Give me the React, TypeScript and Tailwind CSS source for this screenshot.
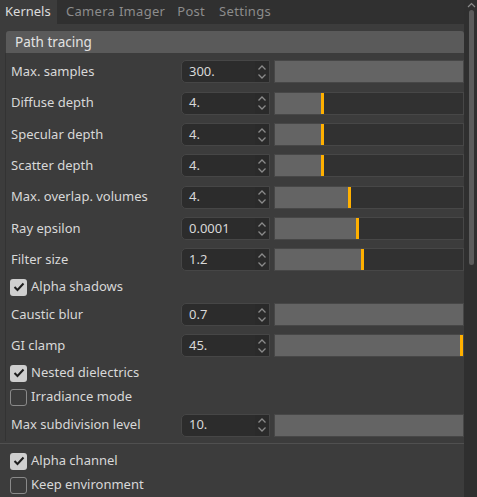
import React from "react";

type Row =
  | { kind: "num"; label: string; value: string; pos: number | null; h: string }
  | { kind: "check"; label: string; checked: boolean };

const rows: Row[] = [
  { kind: "num", label: "Max. samples", value: "300.", pos: null, h: "h-[31px]" },
  { kind: "num", label: "Diffuse depth", value: "4.", pos: 46, h: "h-[32px]" },
  { kind: "num", label: "Specular depth", value: "4.", pos: 46, h: "h-[31px]" },
  { kind: "num", label: "Scatter depth", value: "4.", pos: 46, h: "h-[31px]" },
  { kind: "num", label: "Max. overlap. volumes", value: "4.", pos: 73, h: "h-[32px]" },
  { kind: "num", label: "Ray epsilon", value: "0.0001", pos: 81, h: "h-[31px]" },
  { kind: "num", label: "Filter size", value: "1.2", pos: 86, h: "h-[31px]" },
  { kind: "check", label: "Alpha shadows", checked: true },
  { kind: "num", label: "Caustic blur", value: "0.7", pos: null, h: "h-[31px]" },
  { kind: "num", label: "GI clamp", value: "45.", pos: 185, h: "h-[31px]" },
  { kind: "check", label: "Nested dielectrics", checked: true },
  { kind: "check", label: "Irradiance mode", checked: false },
  { kind: "num", label: "Max subdivision level", value: "10.", pos: null, h: "h-[32px]" },
];

function Spinner() {
  return (
    <svg width="10" height="16" viewBox="0 0 10 16" fill="none" stroke="#8a8a8a" strokeWidth="1.3">
      <path d="M1.5 5.5 L5 2 L8.5 5.5" />
      <path d="M1.5 10.5 L5 14 L8.5 10.5" />
    </svg>
  );
}

function CheckBox({ checked }: { checked: boolean }) {
  return checked ? (
    <div className="w-[17px] h-[17px] rounded-[3px] bg-[#cfcfcf] flex items-center justify-center">
      <svg width="12" height="10" viewBox="0 0 12 10" fill="none" stroke="#1e1e1e" strokeWidth="2">
        <path d="M1.5 5 L4.5 8 L10.5 1.5" />
      </svg>
    </div>
  ) : (
    <div className="w-[17px] h-[17px] rounded-[3px] border border-[#8a8a8a]" />
  );
}

function NumRow({ label, value, pos, h }: { label: string; value: string; pos: number | null; h: string }) {
  return (
    <div className={`flex items-center ${h}`}>
      <div className="w-[170px] shrink-0 text-[13px] text-[#d8d8d8]">{label}</div>
      <div className="w-[89px] h-[23px] shrink-0 flex items-center bg-[#2c2c2c] border border-[#464646] rounded-l-[5px]">
        <span className="flex-1 pl-[7px] text-[13px] text-[#d8d8d8]">{value}</span>
        <div className="w-[14px] h-full flex items-center justify-center bg-[#2a2a2a]">
          <Spinner />
        </div>
      </div>
      <div className="ml-[4px] flex-1 min-w-0 h-[23px] border border-[#474747] bg-[#313131] flex overflow-hidden">
        {pos === null ? (
          <div className="flex-1 bg-[#646464]" />
        ) : (
          <>
            <div className="shrink-0 bg-[#646464]" style={{ width: pos }} />
            <div className="shrink-0 w-[3px] bg-[#ffb000]" />
          </>
        )}
      </div>
    </div>
  );
}

function CheckRow({ label, checked }: { label: string; checked: boolean }) {
  return (
    <div className="flex items-center h-[24px]">
      <CheckBox checked={checked} />
      <span className="ml-[4px] text-[13px] text-[#d8d8d8]">{label}</span>
    </div>
  );
}

export default function App() {
  return (
    <div
      className="w-[477px] h-[497px] flex bg-[#3c3c3c] overflow-hidden"
      style={{ fontFamily: '"Noto Sans", "Open Sans", sans-serif' }}
    >
      <div className="w-[464px] flex flex-col">
        {/* tabs */}
        <div className="h-[24px] flex items-center bg-[#303030] text-[13px]">
          <div className="h-full px-[5px] flex items-center bg-[#3c3c3c] text-[#dcdcdc] w-[57px]">Kernels</div>
          <div className="ml-[9px] text-[#8c8c8c] tracking-[0.3px]">Camera Imager</div>
          <div className="ml-[12px] text-[#8c8c8c] tracking-[0.3px]">Post</div>
          <div className="ml-[14px] text-[#8c8c8c] tracking-[0.3px]">Settings</div>
        </div>

        <div className="pt-[7px]">
          <div className="ml-[6px] h-[22px] bg-[#5a5a5a] rounded-t-[3px] flex items-center pl-[9px] text-[13.5px] text-[#e2e2e2]">
            Path tracing
          </div>
          <div className="ml-[5px] border-l border-[#333333] pl-[5px] pt-[3px]">
            {rows.map((r) =>
              r.kind === "num" ? (
                <NumRow key={r.label} label={r.label} value={r.value} pos={r.pos} h={r.h} />
              ) : (
                <div key={r.label} className="ml-[-1px]">
                  <CheckRow label={r.label} checked={r.checked} />
                </div>
              )
            )}
          </div>
          <div className="mt-[2px] h-[1px] bg-[#505050]" />
          <div className="pl-[10px] pt-[5px]">
            <CheckRow label="Alpha channel" checked={true} />
            <CheckRow label="Keep environment" checked={false} />
          </div>
        </div>
      </div>

      {/* scrollbar */}
      <div className="w-[13px] bg-[#2f2f2f] flex flex-col items-center">
        <svg width="9" height="6" viewBox="0 0 9 6" fill="none" stroke="#8a8a8a" strokeWidth="1.2" className="mt-[2px] ml-[1px]">
          <path d="M1 5 L4.5 1.5 L8 5" />
        </svg>
        <div className="mt-[2px] ml-[1px] w-[5px] h-[255px] rounded-full bg-[#5c5c5c]" />
      </div>
    </div>
  );
}
